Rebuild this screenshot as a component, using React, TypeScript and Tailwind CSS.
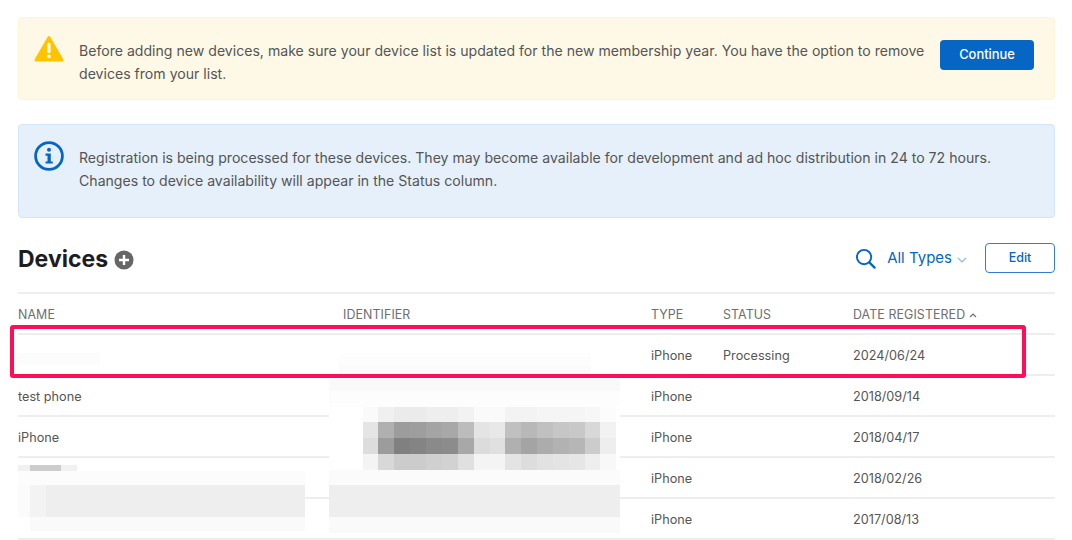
const FONT = "font-['Inter','Liberation_Sans',sans-serif]";

const rows = [
  { name: "", type: "iPhone", status: "Processing", date: "2024/06/24" },
  { name: "test phone", type: "iPhone", status: "", date: "2018/09/14" },
  { name: "iPhone", type: "iPhone", status: "", date: "2018/04/17" },
  { name: "", type: "iPhone", status: "", date: "2018/02/26" },
  { name: "", type: "iPhone", status: "", date: "2017/08/13" },
];

const gridCols = "grid grid-cols-[325px_308px_72px_130px_1fr]";

// pixelated redaction blocks from the screenshot: [x, y, w, h, color]
const blocks: [number, number, number, number, string][] = [
  [18, 353, 82, 12, "#fcfcfc"],
  [339, 353, 252, 13, "#fdfdfd"],
  [339, 366, 252, 9, "#fbfbfb"],
  [329, 379, 291, 12, "#f9f9f9"],
  [329, 391, 291, 16, "#fdfdfd"],
  [329, 407, 291, 63, "#ffffff"],
  [329, 470, 291, 15, "#fbfbfb"],
  [329, 485, 291, 32, "#eeeeee"],
  [329, 517, 291, 16, "#fafafa"],
  [18, 465, 59, 6, "#f1f1f1"],
  [30, 465, 31, 6, "#cccccc"],
  [18, 471, 287, 14, "#fcfcfc"],
  [18, 485, 12, 16, "#fbfbfb"],
  [30, 485, 16, 32, "#f3f3f3"],
  [46, 485, 259, 32, "#eeeeee"],
  [18, 501, 12, 16, "#fbfbfb"],
  [18, 517, 12, 14, "#ffffff"],
  [30, 517, 275, 14, "#fafafa"],
];

const mosaicX = [363, 378, 394, 410, 426, 442, 458, 474, 490, 505, 521, 537, 553, 569, 585, 600, 616];
const mosaicY = [407, 422, 438, 454, 470];
const mosaic = [
  ["#fafafa", "#f0f0f0", "#ebebeb", "#ebebeb", "#eeeeee", "#eeeeee", "#f2f2f2", "#fafafa", "#fafafa", "#f3f3f3", "#f3f3f3", "#f5f5f5", "#f5f5f5", "#f5f5f5", "#f7f7f7", "#fcfcfc"],
  ["#e5e5e5", "#b0b0b0", "#9c9c9c", "#9e9e9e", "#a4a4a4", "#a8a8a8", "#bcbcbc", "#e4e4e4", "#e8e8e8", "#c0c0c0", "#b8b8b8", "#c0c0c0", "#c6c6c6", "#c8c8c8", "#d8d8d8", "#f2f2f2"],
  ["#dddddd", "#9c9c9c", "#808080", "#848484", "#8a8a8a", "#8c8c8c", "#a8a8a8", "#dcdcdc", "#e0e0e0", "#b0b0b0", "#a4a4a4", "#acacac", "#b2b2b2", "#b6b6b6", "#cccccc", "#eeeeee"],
  ["#f4f4f4", "#d8d8d8", "#cccccc", "#cccccc", "#d0d0d0", "#d2d2d2", "#e0e0e0", "#f4f4f4", "#f4f4f4", "#e4e4e4", "#dddddd", "#e2e2e2", "#e4e4e4", "#e6e6e6", "#eeeeee", "#f8f8f8"],
];

function WarningIcon() {
  return (
    <svg width="30" height="28" viewBox="0 0 30 28" className="shrink-0">
      <path d="M15 2.5 L28 25 H2 Z" fill="#ffc400" stroke="#ffc400" strokeWidth="3" strokeLinejoin="round" />
      <rect x="13.4" y="7.5" width="3.2" height="10.5" rx="1.6" fill="#fffbe8" />
      <circle cx="15" cy="21.3" r="1.9" fill="#fffbe8" />
    </svg>
  );
}

function InfoIcon() {
  return (
    <svg width="30" height="30" viewBox="0 0 30 30" className="shrink-0">
      <circle cx="15" cy="15" r="13.4" fill="none" stroke="#0566c5" strokeWidth="2.8" />
      <circle cx="15" cy="8.8" r="2" fill="#0566c5" />
      <path d="M11.5 12.6 H16.8 V20.4 H18.8 V22.6 H11.5 V20.4 H13.5 V14.8 H11.5 Z" fill="#0566c5" />
    </svg>
  );
}

export default function App() {
  return (
    <div className={`${FONT} relative h-[540px] w-[1072px] overflow-hidden bg-white pl-[18px] pr-[17px] pt-[17px] text-[#555]`}>
      <div className="flex h-[83px] items-start rounded border border-[#fdf5d5] bg-[#fef9e7] pl-[15px] pr-5 pt-[17px]">
        <WarningIcon />
        <p className="ml-[15px] mt-[4px] w-[850px] text-[14.1px] leading-[23px]">
          Before adding new devices, make sure your device list is updated for the new membership year. You have the
          option to remove devices from your list.
        </p>
        <button className="ml-auto mt-[5px] h-[30px] w-[94px] rounded bg-[#0566c5] text-[12.9px] font-medium text-white">
          Continue
        </button>
      </div>

      <div className="mt-[24px] flex h-[94px] items-start rounded border border-[#d3e5f6] bg-[#e5f0fa] pl-[15px] pt-[16px]">
        <InfoIcon />
        <p className="ml-[15px] mt-[5px] text-[14.1px] leading-[23px]">
          Registration is being processed for these devices. They may become available for development and ad hoc
          distribution in 24 to 72 hours.
          <br />
          Changes to device availability will appear in the Status column.
        </p>
      </div>

      <div className="mt-[25px] flex h-[51px] items-start justify-between border-b-2 border-[#eeeeee]">
        <div className="flex items-center gap-[6px]">
          <h1 className="text-[23px] font-bold leading-[32px] text-[#1d1d1f]">Devices</h1>
          <svg width="20" height="20" viewBox="0 0 20 20" className="mt-[2px]">
            <circle cx="10" cy="10" r="9.5" fill="#666" />
            <path d="M10 5 V15 M5 10 H15" stroke="#fff" strokeWidth="2.4" />
          </svg>
        </div>
        <div className="flex items-center text-[#0566c5]">
          <svg width="21" height="21" viewBox="0 0 22 22" fill="none" stroke="#0566c5" strokeWidth="2">
            <circle cx="9.5" cy="9.5" r="7.5" />
            <path d="M15 15 L20.5 20.5" strokeWidth="2.4" strokeLinecap="round" />
          </svg>
          <span className="ml-[11px] text-[15px] leading-[30px]">All Types</span>
          <svg width="10" height="6" viewBox="0 0 10 6" fill="none" stroke="#8cb8e4" strokeWidth="1.2" className="ml-[5px] mt-[3px]">
            <path d="M1 1 L5 5 L9 1" />
          </svg>
          <button className="ml-[18px] h-[30px] w-[70px] rounded border-[1.5px] border-[#2f7fce] text-[12.5px] font-medium text-[#0566c5]">
            Edit
          </button>
        </div>
      </div>

      <div className={`${gridCols} h-[41px] items-center border-b-2 border-[#eeeeee] pt-[4px] text-[12.4px] tracking-[0.1px] text-[#6e6e73]`}>
        <div>NAME</div>
        <div>IDENTIFIER</div>
        <div>TYPE</div>
        <div>STATUS</div>
        <div className="flex items-center gap-1">
          DATE REGISTERED
          <svg width="8" height="5" viewBox="0 0 8 5" fill="none" stroke="#6e6e73" strokeWidth="1.2">
            <path d="M1 4 L4 1 L7 4" />
          </svg>
        </div>
      </div>

      {rows.map((row) => (
        <div key={row.date} className={`${gridCols} h-[41px] items-center border-b-2 border-[#eeeeee] pt-[2px] text-[12.7px]`}>
          <div>{row.name}</div>
          <div />
          <div>{row.type}</div>
          <div>{row.status}</div>
          <div>{row.date}</div>
        </div>
      ))}

      <svg width="1072" height="540" className="pointer-events-none absolute left-0 top-0" shapeRendering="crispEdges">
        {blocks.map(([x, y, w, h, c], i) => (
          <rect key={i} x={x} y={y} width={w} height={h} fill={c} />
        ))}
        {mosaic.map((line, r) =>
          line.map((c, i) => (
            <rect
              key={`${r}-${i}`}
              x={mosaicX[i]}
              y={mosaicY[r]}
              width={mosaicX[i + 1] - mosaicX[i]}
              height={mosaicY[r + 1] - mosaicY[r]}
              fill={c}
            />
          ))
        )}
      </svg>

      <div className="pointer-events-none absolute left-[10px] top-[325px] h-[53px] w-[1016px] rounded-[3px] border-4 border-[#fb0f5a]" />
    </div>
  );
}
